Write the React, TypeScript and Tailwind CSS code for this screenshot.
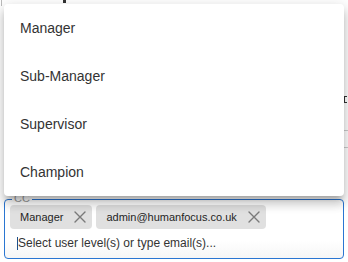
import React from "react";

function XIcon() {
  return (
    <svg width="12" height="12" viewBox="0 0 12 12" className="block">
      <path d="M1 1 L11 11 M11 1 L1 11" stroke="#7a7a7a" strokeWidth="1.4" strokeLinecap="round" fill="none" />
    </svg>
  );
}

function Chip({ label }: { label: string }) {
  return (
    <div className="flex items-center h-[24px] bg-[#e0e0e0] rounded-[4px] pl-[10px] pr-[6px]">
      <span className="text-[11px] leading-none text-[#1f1f1f]">{label}</span>
      <span className="ml-[11px]">
        <XIcon />
      </span>
    </div>
  );
}

export default function App() {
  const items = ["Manager", "Sub-Manager", "Supervisor", "Champion"];
  return (
    <div
      className="relative w-[348px] h-[262px] bg-white overflow-hidden"
      style={{ fontFamily: '"Liberation Sans", Arial, sans-serif' }}
    >
      {/* underlying form */}
      <div className="flex flex-col">
        <div className="relative h-[199px]">
          <div className="h-[6px] border-l border-[#bbb] ml-[1px] w-[62px]" />
          <div className="absolute left-[63px] top-0 w-[3px] h-[3px] bg-[#333]" />
          <div className="absolute left-[344px] top-[96px] w-[3px] h-[7px] border-l border-t border-b border-[#333]" />
          <div className="absolute left-[340px] top-[130px] w-[8px] border-t border-[#ccc]" />
          <div className="absolute left-[340px] top-[147px] w-[8px] border-t border-[#ccc]" />
        </div>
        <div className="relative mx-[4px] h-[60px] border border-[#2a76d2] rounded-[4px] bg-gradient-to-b from-white from-70% to-[#f6f6f6]">
          <span className="absolute left-[7px] top-[-7px] px-[2px] bg-white text-[11px] leading-none text-[#9a9a9a]">
            CC
          </span>
          <div className="flex gap-[4px] pl-[5px] pt-[5px]">
            <Chip label="Manager" />
            <Chip label="admin@humanfocus.co.uk" />
          </div>
          <div className="flex items-center pl-[12px] mt-[6px] h-[16px]">
            <span className="w-[1px] h-[13px] bg-[#1e4f8a]" />
            <span className="text-[12px] leading-none text-[#333]">
              Select user level(s) or type email(s)...
            </span>
          </div>
        </div>
      </div>

      {/* dropdown menu overlay */}
      <div className="absolute left-[4px] top-[4px] w-[340px] bg-white rounded-[4px] shadow-[0px_5px_5px_-3px_rgba(0,0,0,0.2),0px_8px_10px_1px_rgba(0,0,0,0.14),0px_3px_14px_2px_rgba(0,0,0,0.12)]">
        {items.map((it) => (
          <div key={it} className="h-[48px] flex items-center pl-[16px] text-[14px] text-[#333]">
            {it}
          </div>
        ))}
      </div>
    </div>
  );
}
